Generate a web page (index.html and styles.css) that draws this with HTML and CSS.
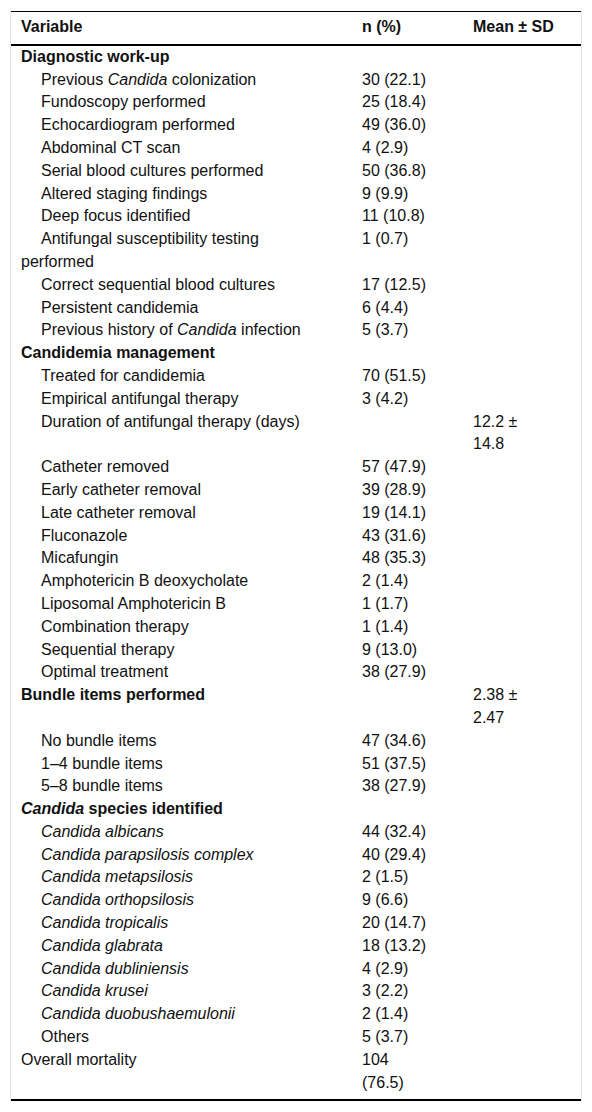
FILE: index.html
```html
<!DOCTYPE html>
<html lang="en">
<head>
	<meta charset="UTF-8">
	<title>Candidemia management</title>
	<link rel="stylesheet" href="styles.css">
</head>
<body>
	<div class="table-wrap">
		<table class="data-table">
			<colgroup>
				<col class="col-var">
				<col class="col-n">
				<col class="col-mean">
			</colgroup>
			<thead>
				<tr>
					<th>Variable</th>
					<th>n (%)</th>
					<th>Mean ± SD</th>
				</tr>
			</thead>
			<tbody>
				<tr class="group"><td>Diagnostic work-up</td><td></td><td></td></tr>
				<tr><td class="sub">Previous <i>Candida</i> colonization</td><td>30 (22.1)</td><td></td></tr>
				<tr><td class="sub">Fundoscopy performed</td><td>25 (18.4)</td><td></td></tr>
				<tr><td class="sub">Echocardiogram performed</td><td>49 (36.0)</td><td></td></tr>
				<tr><td class="sub">Abdominal CT scan</td><td>4 (2.9)</td><td></td></tr>
				<tr><td class="sub">Serial blood cultures performed</td><td>50 (36.8)</td><td></td></tr>
				<tr><td class="sub">Altered staging findings</td><td>9 (9.9)</td><td></td></tr>
				<tr><td class="sub">Deep focus identified</td><td>11 (10.8)</td><td></td></tr>
				<tr><td class="sub">Antifungal susceptibility testing performed</td><td>1 (0.7)</td><td></td></tr>
				<tr><td class="sub">Correct sequential blood cultures</td><td>17 (12.5)</td><td></td></tr>
				<tr><td class="sub">Persistent candidemia</td><td>6 (4.4)</td><td></td></tr>
				<tr><td class="sub">Previous history of <i>Candida</i> infection</td><td>5 (3.7)</td><td></td></tr>

				<tr class="group"><td>Candidemia management</td><td></td><td></td></tr>
				<tr><td class="sub">Treated for candidemia</td><td>70 (51.5)</td><td></td></tr>
				<tr><td class="sub">Empirical antifungal therapy</td><td>3 (4.2)</td><td></td></tr>
				<tr><td class="sub">Duration of antifungal therapy (days)</td><td></td><td>12.2 ± 14.8</td></tr>
				<tr><td class="sub">Catheter removed</td><td>57 (47.9)</td><td></td></tr>
				<tr><td class="sub">Early catheter removal</td><td>39 (28.9)</td><td></td></tr>
				<tr><td class="sub">Late catheter removal</td><td>19 (14.1)</td><td></td></tr>
				<tr><td class="sub">Fluconazole</td><td>43 (31.6)</td><td></td></tr>
				<tr><td class="sub">Micafungin</td><td>48 (35.3)</td><td></td></tr>
				<tr><td class="sub">Amphotericin B deoxycholate</td><td>2 (1.4)</td><td></td></tr>
				<tr><td class="sub">Liposomal Amphotericin B</td><td>1 (1.7)</td><td></td></tr>
				<tr><td class="sub">Combination therapy</td><td>1 (1.4)</td><td></td></tr>
				<tr><td class="sub">Sequential therapy</td><td>9 (13.0)</td><td></td></tr>
				<tr><td class="sub">Optimal treatment</td><td>38 (27.9)</td><td></td></tr>

				<tr class="group"><td>Bundle items performed</td><td></td><td class="plain">2.38 ± 2.47</td></tr>
				<tr><td class="sub">No bundle items</td><td>47 (34.6)</td><td></td></tr>
				<tr><td class="sub">1–4 bundle items</td><td>51 (37.5)</td><td></td></tr>
				<tr><td class="sub">5–8 bundle items</td><td>38 (27.9)</td><td></td></tr>

				<tr class="group"><td><i>Candida</i> species identified</td><td></td><td></td></tr>
				<tr><td class="sub"><i>Candida albicans</i></td><td>44 (32.4)</td><td></td></tr>
				<tr><td class="sub"><i>Candida parapsilosis complex</i></td><td>40 (29.4)</td><td></td></tr>
				<tr><td class="sub"><i>Candida metapsilosis</i></td><td>2 (1.5)</td><td></td></tr>
				<tr><td class="sub"><i>Candida orthopsilosis</i></td><td>9 (6.6)</td><td></td></tr>
				<tr><td class="sub"><i>Candida tropicalis</i></td><td>20 (14.7)</td><td></td></tr>
				<tr><td class="sub"><i>Candida glabrata</i></td><td>18 (13.2)</td><td></td></tr>
				<tr><td class="sub"><i>Candida dubliniensis</i></td><td>4 (2.9)</td><td></td></tr>
				<tr><td class="sub"><i>Candida krusei</i></td><td>3 (2.2)</td><td></td></tr>
				<tr><td class="sub"><i>Candida duobushaemulonii</i></td><td>2 (1.4)</td><td></td></tr>
				<tr><td class="sub">Others</td><td>5 (3.7)</td><td></td></tr>
				<tr class="last"><td>Overall mortality</td><td>104 (76.5)</td><td></td></tr>
			</tbody>
		</table>
	</div>
</body>
</html>
```

FILE: styles.css
```css
body {
	margin: 0;
	padding: 0;
	background-color: #fff;
	color: #111;
	font-family: "Liberation Sans", Arial, sans-serif;
	font-size: 16px;
}

/*外层只负责左右两条浅灰竖线*/
.table-wrap {
	margin: 11px 10px 0;
	border-left: 1px solid #e4e4e4;
	border-right: 1px solid #e4e4e4;
}

.data-table {
	width: 100%;
	table-layout: fixed;
	border-collapse: separate;
	border-spacing: 0;
	border-top: 1px solid #000;
	border-bottom: 2px solid #000;
	line-height: 22.8px;
}
.data-table .col-var {
	width: 341px;
}
.data-table .col-n {
	width: 111px;
}
.data-table .col-mean {
	width: 118px;
}

.data-table th,
.data-table td {
	padding: 0 10px;
	text-align: left;
	vertical-align: top;
}
/*列宽窄一点，数字和均值会自然折行*/
.data-table th:first-child,
.data-table td:first-child {
	padding-right: 34px;
}
.data-table th:nth-child(2),
.data-table td:nth-child(2) {
	padding-right: 33px;
}
.data-table th:nth-child(3),
.data-table td:nth-child(3) {
	padding-right: 38px;
}

.data-table thead th {
	padding-top: 4px;
	padding-bottom: 5px;
	font-weight: bold;
	white-space: nowrap;
	border-bottom: 2px solid #000;
}

.data-table .group td {
	font-weight: bold;
}
.data-table .group td.plain {
	font-weight: normal;
}
/*缩进只作用在首行，折行回到左边*/
.data-table td.sub {
	text-indent: 20px;
}
.data-table .last td {
	padding-bottom: 5px;
}
```
